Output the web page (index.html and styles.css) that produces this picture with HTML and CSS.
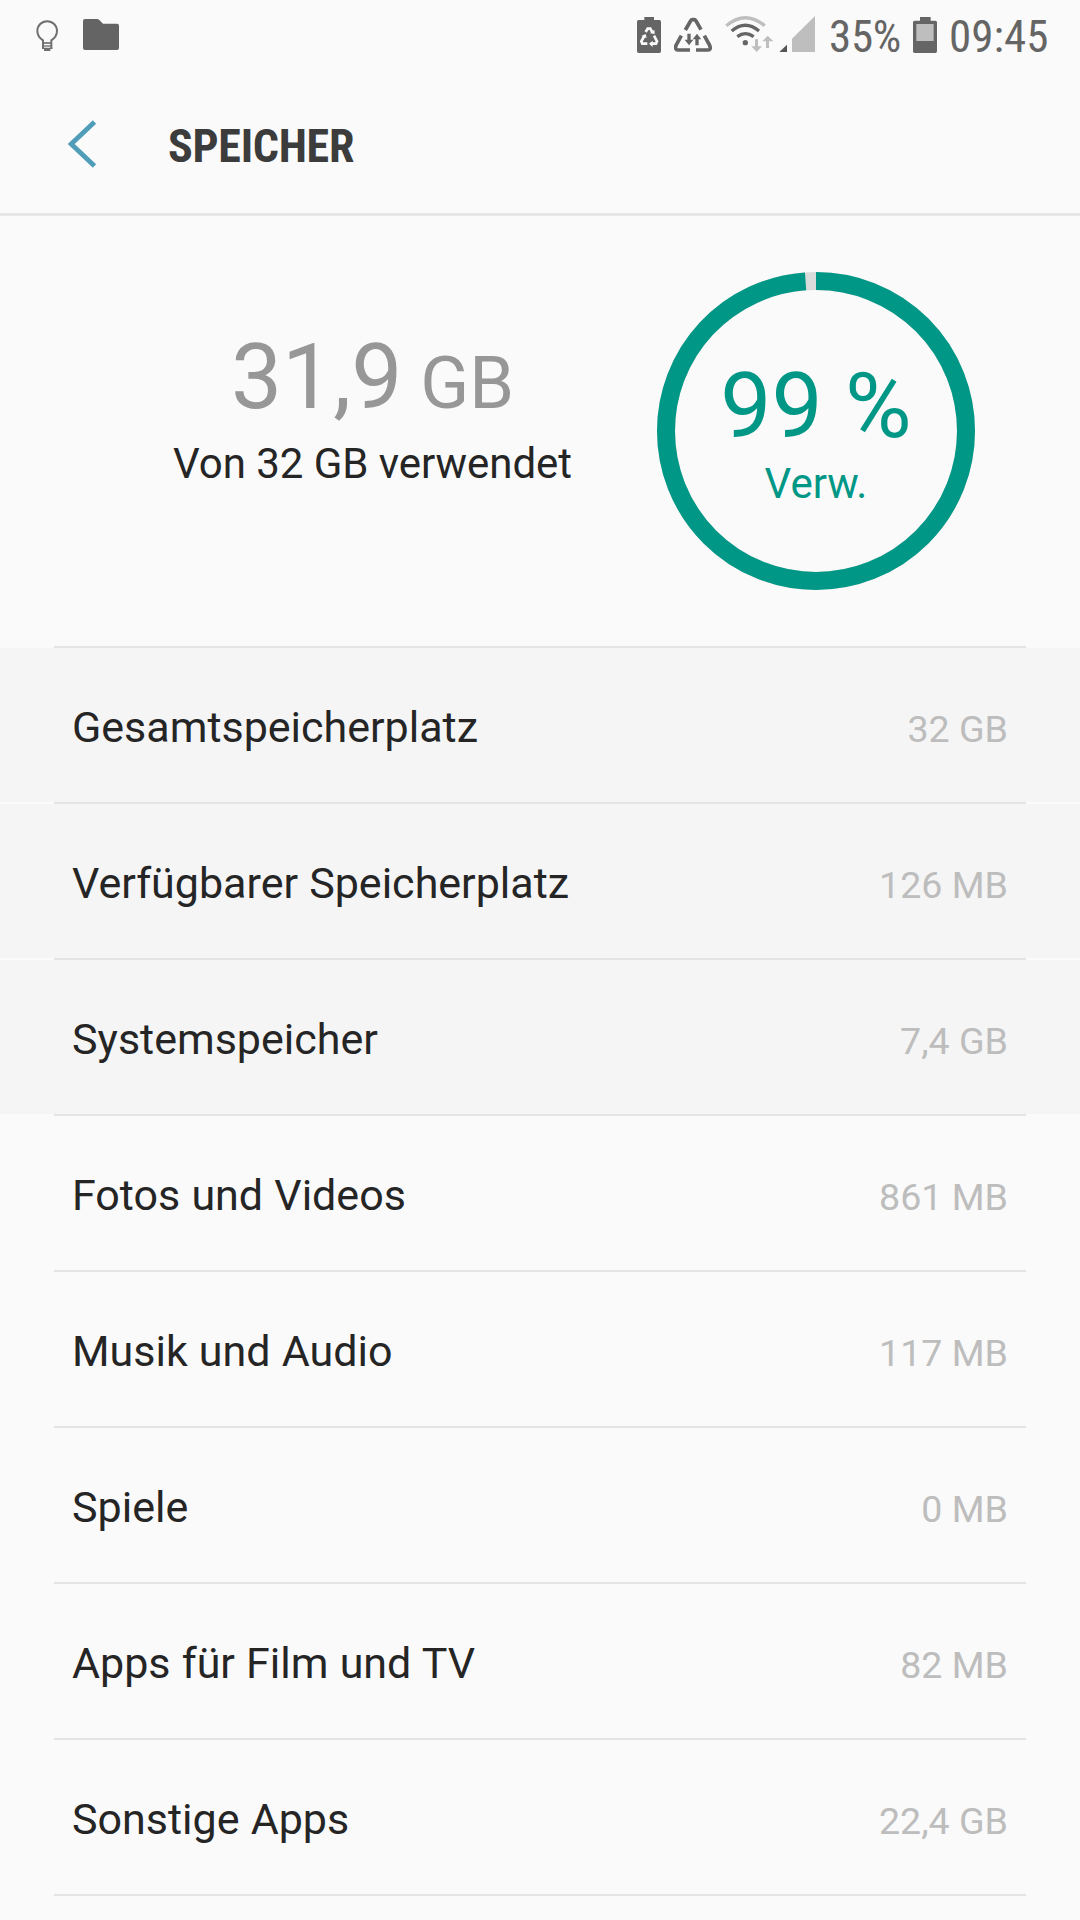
FILE: index.html
```html
<!DOCTYPE html>
<html lang="de">
<head>
<meta charset="utf-8">
<title>Speicher</title>
<link rel="stylesheet" href="styles.css">
</head>
<body>
<div class="status">
  <svg class="bulb" viewBox="105 0 72 216" width="24" height="72">
    <g fill="none" stroke="#707070" stroke-width="6">
      <path d="M129 147V121C117 113 112 104 112 93A29.500 29.500 0 0 1 171 93C171 104 166 113 154 121V147"/>
      <path d="M129 129H154" stroke-width="5"/><path d="M129 138H154" stroke-width="4"/>
    </g>
    <path d="M126 143H157V147H151V153H132V147H126Z" fill="#707070"/>
  </svg>
  <svg class="folder" viewBox="249 0 108 216" width="36" height="72">
    <path d="M255 57H291Q295 57 298 60L309 71H351Q357 71 357 77V144Q357 150 351 150H255Q249 150 249 144V63Q249 57 255 57Z" fill="#646464"/>
  </svg>
  <div class="status-right">
    <svg viewBox="51 0 72 216" width="24" height="72">
      <path d="M73 51H102V60H118Q123 60 123 65V154Q123 159 118 159H56Q51 159 51 154V65Q51 60 56 60H73Z" fill="#656565"/>
      <g fill="none" stroke="#fafafa" stroke-width="8">
        <path d="M77 96L83 86H91L97 97"/>
        <path d="M73 108L64 124L67 131H82"/>
        <path d="M102 107L111 124L108 131H92"/>
      </g>
      <path d="M90 100L104 102L103 89ZM64 108L77 102L80 114ZM98 122V141L87 131Z" fill="#fafafa"/>
    </svg>
    <svg class="recycle" viewBox="162 0 114 216" width="38" height="72">
      <g fill="none" stroke="#656565" stroke-width="11">
        <path d="M196 90L211 64Q213 59 217 59H222Q226 59 228 63L243 89"/>
        <path d="M184 107L168 136Q164 150 174 150H210"/>
        <path d="M253 107L269 136Q274 150 264 150H228"/>
      </g>
      <path d="M202 101H212V119H220L207 136L194 119H202ZM226 136H236V118H244L231 101L218 118H226Z" fill="#656565"/>
    </svg>
    <svg class="wifi" viewBox="315 0 147 216" width="49" height="72">
      <g fill="none" stroke-width="10">
        <path d="M319 77Q376 29 434 77" stroke="#bebebe"/>
        <path d="M335 93Q376 59 417 93" stroke="#656565"/>
        <path d="M352 110Q376 92 401 110" stroke="#656565"/>
      </g>
      <circle cx="376" cy="128" r="8" fill="#656565"/>
      <path d="M405 118H414V139H426L410 156L394 139H405ZM438 144H447V124H460L443 107L427 124H438Z" fill="#bebebe"/>
    </svg>
    <svg class="signal" viewBox="477 0 108 216" width="36" height="72">
      <path d="M501 134V156H478Z" fill="#555"/>
      <path d="M585 48V156H516V116Z" fill="#bebebe"/>
    </svg>
    <span class="percent">35%</span>
    <svg class="battery" viewBox="279 0 72 216" width="24" height="72">
      <path d="M300 51H332V62H346Q351 62 351 67V154Q351 159 346 159H284Q279 159 279 154V67Q279 62 284 62H300Z" fill="#656565"/>
      <path d="M289 72H341V123H289Z" fill="#bebebe"/>
    </svg>
    <span class="clock">09:45</span>
  </div>
</div>

<header class="header">
  <svg class="back" viewBox="66 118 32 52" width="32" height="52">
    <path d="M94.500 122L71.200 144L94.500 166" fill="none" stroke="#4f9db9" stroke-width="4.800"/>
  </svg>
  <h1 class="title">SPEICHER</h1>
</header>

<section class="summary">
  <div class="usage">
    <div class="amount">31,9<span class="unit"> GB</span></div>
    <div class="total">Von 32 GB verwendet</div>
  </div>
  <div class="ring">
    <svg class="ring-art" viewBox="0 0 318 318" width="318" height="318">
      <circle cx="159" cy="159" r="150" fill="none" stroke="#dadcdc" stroke-width="18"/>
      <circle cx="159" cy="159" r="150" fill="none" stroke="#019786" stroke-width="18" pathLength="360" stroke-dasharray="356 4" transform="rotate(-90 159 159)"/>
    </svg>
    <div class="ring-value">99 %</div>
    <div class="ring-label">Verw.</div>
  </div>
</section>

<main class="list">
  <div class="row shaded"><span class="label">Gesamtspeicherplatz</span><span class="value">32 GB</span></div>
  <div class="row shaded"><span class="label">Verfügbarer Speicherplatz</span><span class="value">126 MB</span></div>
  <div class="row shaded"><span class="label">Systemspeicher</span><span class="value">7,4 GB</span></div>
  <div class="row"><span class="label">Fotos und Videos</span><span class="value">861 MB</span></div>
  <div class="row"><span class="label">Musik und Audio</span><span class="value">117 MB</span></div>
  <div class="row"><span class="label">Spiele</span><span class="value">0 MB</span></div>
  <div class="row"><span class="label">Apps für Film und TV</span><span class="value">82 MB</span></div>
  <div class="row"><span class="label">Sonstige Apps</span><span class="value">22,4 GB</span></div>
</main>
</body>
</html>
```
FILE: styles.css
```css
* { box-sizing: border-box; }
body {
  margin: 0;
  width: 1080px;
  height: 1920px;
  overflow: hidden;
  background: #fafafa;
  color: #252525;
  font-family: Roboto, sans-serif;
  white-space: nowrap;
}
svg { display: block; flex: none; }

.status { display: flex; height: 72px; padding: 0 31px 0 35px; }
.folder { margin-left: 24px; }
.status-right {
  display: flex;
  margin-left: auto;
  color: #656565;
  font-family: "Roboto Condensed", Roboto, sans-serif;
  font-stretch: 75%;
  font-size: 45px;
  line-height: 73px;
}
.recycle { margin-left: 13px; }
.wifi { margin-left: 13px; }
.signal { margin-left: 5px; }
.percent { width: 73px; margin-left: 14px; letter-spacing: -0.3px; }
.battery { margin-left: 11px; }
.clock { width: 100px; margin-left: 12px; }

.header {
  display: flex;
  height: 144px;
  padding: 46px 0 0 66px;
  border-bottom: 3px solid #e6e6e6;
}
.title {
  margin: 0 0 0 70px;
  color: #3c3c3c;
  font-family: "Roboto Condensed", Roboto, sans-serif;
  font-stretch: 75%;
  font-size: 46px;
  font-weight: 700;
  letter-spacing: -0.3px;
  line-height: 56px;
}

.summary { display: flex; height: 430px; }
.usage { width: 517px; margin-left: 114px; padding-top: 106px; text-align: center; }
.amount { color: #979797; font-size: 91px; line-height: 110px; }
.unit { font-size: 72px; }
.total { font-size: 42px; line-height: 50px; letter-spacing: -0.05px; }
.ring {
  position: relative;
  width: 318px;
  height: 318px;
  margin: 56px 0 0 26px;
  padding-top: 79px;
  color: #019786;
  text-align: center;
}
.ring-art { position: absolute; inset: 0; }
.ring-value { position: relative; font-size: 91px; line-height: 110px; }
.ring-label { position: relative; font-size: 42px; line-height: 46px; }

.list::before,
.row::after {
  content: "";
  height: 2px;
  background: #e4e4e4;
}
.list::before { display: block; margin: 0 54px; }
.row {
  position: relative;
  display: flex;
  justify-content: space-between;
  align-items: baseline;
  height: 154px;
  margin-bottom: 2px;
  padding: 2px 72px 0;
  line-height: 154px;
}
.row::after { position: absolute; left: 54px; right: 54px; bottom: -2px; }
.shaded { background: #f5f5f5; }
.label { font-size: 43px; word-spacing: 0.5px; }
.value { color: #bdbdbd; font-size: 37.6px; }
```
